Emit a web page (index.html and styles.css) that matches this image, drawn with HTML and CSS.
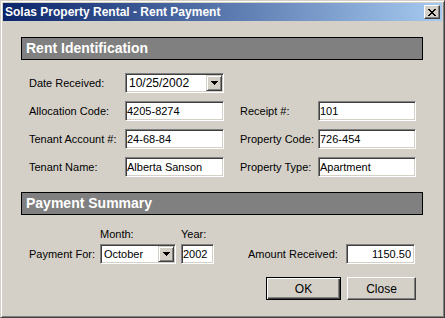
FILE: index.html
```html
<!DOCTYPE html>
<html lang="en">
<head>
    <meta charset="UTF-8">
    <meta name="viewport" content="width=device-width, initial-scale=1.0">
    <title>Solas Property Rental - Rent Payment</title>
    <link rel="stylesheet" href="styles.css">
</head>
<body>
<div class="window">
    <div class="titlebar">
        <span class="title">Solas Property Rental - Rent Payment</span>
        <button class="title-close" aria-label="Close">
            <svg width="8" height="7" viewBox="0 0 8 7" shape-rendering="crispEdges">
                <path d="M0 0h2v1H0z M6 0h2v1H6z M1 1h2v1H1z M5 1h2v1H5z M2 2h4v1H2z M3 3h2v1H3z M2 4h4v1H2z M1 5h2v1H1z M5 5h2v1H5z M0 6h2v1H0z M6 6h2v1H6z" fill="#000"/>
            </svg>
        </button>
    </div>
    <div class="dialog-body">
        <div class="section-head">Rent Identification</div>
        <div class="ident">
            <label class="col-a">Date Received:</label>
            <div class="combo date-combo">
                <span class="combo-text">10/25/2002</span>
                <span class="drop">
                    <svg width="7" height="4" viewBox="0 0 7 4" shape-rendering="crispEdges"><path d="M0 0h7v1H0z M1 1h5v1H1z M2 2h3v1H2z M3 3h1v1H3z" fill="#000"/></svg>
                </span>
            </div>
            <label class="col-a">Allocation Code:</label>
            <input class="field" type="text" value="4205-8274" readonly>
            <label>Receipt #:</label>
            <input class="field" type="text" value="101" readonly>
            <label class="col-a">Tenant Account #:</label>
            <input class="field" type="text" value="24-68-84" readonly>
            <label>Property Code:</label>
            <input class="field" type="text" value="726-454" readonly>
            <label class="col-a">Tenant Name:</label>
            <input class="field" type="text" value="Alberta Sanson" readonly>
            <label>Property Type:</label>
            <input class="field" type="text" value="Apartment" readonly>
        </div>

        <div class="section-head second">Payment Summary</div>
        <div class="payment">
            <label class="pay-label">Payment For:</label>
            <div class="stack month">
                <label>Month:</label>
                <div class="combo month-combo">
                    <span class="combo-text">October</span>
                    <span class="drop">
                        <svg width="7" height="4" viewBox="0 0 7 4" shape-rendering="crispEdges"><path d="M0 0h7v1H0z M1 1h5v1H1z M2 2h3v1H2z M3 3h1v1H3z" fill="#000"/></svg>
                    </span>
                </div>
            </div>
            <div class="stack year">
                <label>Year:</label>
                <input class="field" type="text" value="2002" readonly>
            </div>
            <label class="amount-label">Amount Received:</label>
            <input class="field amount" type="text" value="1150.50" readonly>
        </div>

        <div class="actions">
            <button class="btn default">OK</button>
            <button class="btn">Close</button>
        </div>
    </div>
</div>
</body>
</html>
```

FILE: styles.css
```css
body {
    margin: 0;
    font-family: "Liberation Sans", Arial, sans-serif;
    font-size: 11px;
    color: #000;
}
.window {
    width: 445px;
    height: 318px;
    box-sizing: border-box;
    background-color: #d4d0c8;
    border: 1px solid;
    border-color: #d4d0c8 #404040 #404040 #d4d0c8;
    box-shadow: inset 1px 1px #fff, inset -1px -1px #808080;
    padding: 2px;
}
.titlebar {
    height: 18px;
    display: flex;
    align-items: center;
    justify-content: space-between;
    padding: 0 2px;
    background: linear-gradient(to right, #0a246a, #a6caf0);
}
.title {
    color: #fff;
    font-weight: bold;
    font-size: 12px;
    line-height: 18px;
}
.title-close {
    width: 16px;
    height: 14px;
    padding: 0;
    display: flex;
    align-items: center;
    justify-content: center;
    background-color: #d4d0c8;
    border: 1px solid;
    border-color: #fff #404040 #404040 #fff;
    box-shadow: inset -1px -1px #808080, inset 1px 1px #d4d0c8;
}
.dialog-body {
    padding-left: 18px;
}
.section-head {
    width: 402px;
    height: 23px;
    box-sizing: border-box;
    margin-top: 16px;
    padding-left: 4px;
    background-color: #808080;
    border: 1px solid #000;
    color: #fff;
    font-size: 14px;
    font-weight: bold;
    line-height: 21px;
}
.section-head.second {
    margin-top: 15px;
}
.ident {
    display: grid;
    grid-template-columns: 96px 115px 78px 98px;
    grid-auto-rows: 20px;
    row-gap: 8px;
    align-items: center;
    margin-top: 13px;
    padding-left: 8px;
}
.ident .col-a {
    grid-column: 1;
}
.field {
    box-sizing: border-box;
    height: 20px;
    width: 99px;
    margin: 0;
    padding: 0 2px 0 1px;
    font-family: "Liberation Sans", Arial, sans-serif;
    font-size: 11px;
    color: #000;
    background-color: #fff;
    border: 1px solid;
    border-color: #808080 #fff #fff #808080;
    box-shadow: inset 1px 1px #404040, inset -1px -1px #d4d0c8;
    outline: none;
}
.ident .field:nth-of-type(2n) {
    width: 98px;
}
.combo {
    box-sizing: border-box;
    height: 20px;
    display: flex;
    align-items: center;
    justify-content: space-between;
    padding: 2px;
    background-color: #fff;
    border: 1px solid;
    border-color: #808080 #fff #fff #808080;
    box-shadow: inset 1px 1px #404040, inset -1px -1px #d4d0c8;
}
.date-combo {
    width: 99px;
    padding-left: 3px;
}
.date-combo .combo-text {
    font-size: 12px;
}
.combo-text {
    flex: 1;
}
.drop {
    width: 16px;
    height: 16px;
    box-sizing: border-box;
    margin-top: -1px;
    margin-right: -1px;
    display: flex;
    align-items: center;
    justify-content: center;
    background-color: #d4d0c8;
    border: 1px solid;
    border-color: #d4d0c8 #404040 #404040 #d4d0c8;
    box-shadow: inset 1px 1px #fff, inset -1px -1px #808080;
}
.payment {
    display: flex;
    align-items: flex-end;
    margin-top: 13px;
    padding-left: 8px;
}
.pay-label {
    width: 71px;
    line-height: 20px;
}
.stack {
    display: flex;
    flex-direction: column;
    gap: 3px;
}
.stack label {
    line-height: 13px;
}
.month {
    width: 76px;
    margin-right: 5px;
}
.month-combo {
    width: 76px;
    padding-left: 3px;
}
.year .field {
    width: 33px;
}
.amount-label {
    width: 98px;
    margin-left: 34px;
    line-height: 20px;
}
.field.amount {
    width: 69px;
    text-align: right;
    padding-right: 3px;
}
.actions {
    display: flex;
    justify-content: flex-end;
    gap: 6px;
    width: 395px;
    margin-top: 13px;
}
.btn {
    width: 75px;
    height: 23px;
    padding: 0;
    font-family: "Liberation Sans", Arial, sans-serif;
    font-size: 12px;
    color: #000;
    background-color: #d4d0c8;
    border: 1px solid;
    border-color: #fff #404040 #404040 #fff;
    box-shadow: inset -1px -1px #808080, inset 1px 1px #d4d0c8;
}
.btn.default {
    border: 1px solid #000;
    box-shadow: inset 1px 1px #fff, inset -1px -1px #404040, inset -2px -2px #808080;
}
.btn:last-child {
    width: 69px;
}
```
